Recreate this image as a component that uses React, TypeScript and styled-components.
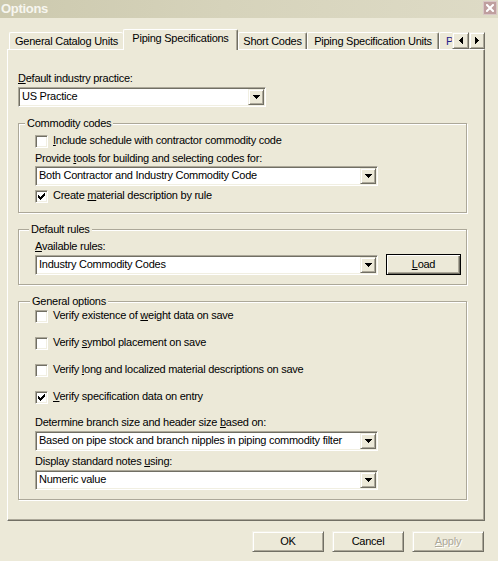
import React from "react";
import styled, { createGlobalStyle, css } from "styled-components";

const Global = createGlobalStyle`
  html, body { margin: 0; padding: 0; background: #ece9d8; }
  body {
    font-family: "Liberation Sans", Arial, sans-serif;
    font-size: 11px;
    letter-spacing: -0.25px;
    color: #000;
  }
  * { box-sizing: border-box; }
`;

const raised = css`
  border: 1px solid;
  border-color: #f1efe2 #716f64 #716f64 #f1efe2;
  box-shadow: inset 1px 1px 0 #fff, inset -1px -1px 0 #aca899;
  background: #ece9d8;
`;

const sunken = css`
  border: 1px solid;
  border-color: #aca899 #fff #fff #aca899;
  box-shadow: inset 1px 1px 0 #716f64, inset -1px -1px 0 #f1efe2;
  background: #fff;
`;

const Window = styled.div`
  width: 498px;
  height: 561px;
  background: #ece9d8;
  display: flex;
  flex-direction: column;
  overflow: hidden;
`;

const TitleBar = styled.div`
  height: 18px;
  flex: none;
  display: flex;
  align-items: flex-start;
  justify-content: space-between;
  padding: 0 1px 0 1px;
  background: linear-gradient(to right, #ccc9ae 0%, #d6d3bb 45%, #dedbc6 100%);
`;

const TitleText = styled.span`
  font-family: "Liberation Sans", Arial, sans-serif;
  font-weight: bold;
  font-size: 13px;
  letter-spacing: -0.3px;
  line-height: 17px;
  color: #f7f6ef;
`;

const CloseBtn = styled.div`
  width: 14px;
  height: 14px;
  margin-top: 1px;
  background: #bf9f9f;
  border: 1px solid #d9c6c6;
  border-radius: 1px;
  display: flex;
  align-items: center;
  justify-content: center;
`;

const Body = styled.div`
  padding: 11px 13px 0 7px;
  display: flex;
  flex-direction: column;
`;

const TabStrip = styled.div`
  height: 21px;
  margin-bottom: -1px;
  display: flex;
  align-items: flex-end;
  position: relative;
  z-index: 1;
`;

const TabViewport = styled.div`
  flex: 1;
  min-width: 0;
  height: 21px;
  display: flex;
  align-items: flex-end;
  overflow: hidden;
  padding-left: 2px;
`;

const Tab = styled.div<{ $w: number; $active?: boolean; $noRight?: boolean; $color?: string }>`
  flex: none;
  width: ${(p) => p.$w}px;
  height: ${(p) => (p.$active ? 21 : 17)}px;
  margin-bottom: ${(p) => (p.$active ? 0 : 1)}px;
  padding-top: 2px;
  display: flex;
  justify-content: ${(p) => (p.$color ? "flex-start" : "center")};
  padding-left: ${(p) => (p.$color ? 6 : 0)}px;
  line-height: 13px;
  white-space: nowrap;
  background: #ece9d8;
  color: ${(p) => p.$color ?? "#000"};
  border-top: 1px solid #fff;
  border-left: 1px solid #fff;
  border-right: ${(p) => (p.$noRight ? "0" : "1px solid #716f64")};
  box-shadow: ${(p) => (p.$noRight ? "none" : "inset -1px 0 0 #aca899")};
  border-radius: 2px 2px 0 0;
`;

const ScrollBtn = styled.div<{ $w: number }>`
  ${raised};
  flex: none;
  width: ${(p) => p.$w}px;
  height: 17px;
  margin-bottom: 1px;
  display: flex;
  align-items: center;
  justify-content: center;
`;

const Panel = styled.div`
  height: 472px;
  border-top: 1px solid #fff;
  border-left: 1px solid #fff;
  border-right: 1px solid #716f64;
  border-bottom: 1px solid #716f64;
  box-shadow: inset -1px -1px 0 #aca899;
  padding: 22px 16px 0 10px;
  display: flex;
  flex-direction: column;
  align-items: flex-start;
`;

const FieldLabel = styled.div<{ $mt?: number; $mb?: number }>`
  line-height: 13px;
  white-space: nowrap;
  margin-top: ${(p) => p.$mt ?? 0}px;
  margin-bottom: ${(p) => p.$mb ?? 2}px;
`;

const Combo = styled.div<{ $w: number }>`
  ${sunken};
  flex: none;
  width: ${(p) => p.$w}px;
  height: 20px;
  padding: 1px;
  display: flex;
  align-items: stretch;
`;

const ComboText = styled.span`
  flex: 1;
  min-width: 0;
  padding: 1px 0 0 2px;
  line-height: 13px;
  white-space: nowrap;
  overflow: hidden;
`;

const DropBtn = styled.span`
  ${raised};
  flex: none;
  width: 16px;
  height: 16px;
  display: flex;
  align-items: center;
  justify-content: center;
`;

const Group = styled.fieldset`
  margin: 10px 0 0 0;
  padding: 0;
  width: 449px;
  min-width: 0;
  border: 1px solid #aca899;
  box-shadow: inset 1px 1px 0 #fff, 1px 1px 0 #fff;
`;

const Legend = styled.legend<{ $off: number }>`
  margin-left: ${(p) => p.$off}px;
  padding: 0 2px;
  line-height: 13px;
  background: #ece9d8;
`;

const GroupBody = styled.div<{ $pt: number }>`
  padding: ${(p) => p.$pt}px 16px 9px 16px;
  display: flex;
  flex-direction: column;
  align-items: flex-start;
`;

const CheckRow = styled.div<{ $mt?: number }>`
  display: flex;
  align-items: flex-start;
  gap: 5px;
  height: 13px;
  margin-top: ${(p) => p.$mt ?? 0}px;
`;

const CheckBox = styled.span`
  ${sunken};
  flex: none;
  width: 13px;
  height: 13px;
  padding: 2px 0 0 2px;
`;

const CheckText = styled.span`
  line-height: 13px;
  margin-top: -1px;
  white-space: nowrap;
`;

const RuleRow = styled.div`
  display: flex;
  align-items: flex-end;
  gap: 8px;
`;

const LoadButton = styled.div`
  width: 75px;
  height: 21px;
  border: 1px solid #000;
  background: #ece9d8;
  box-shadow: inset 1px 1px 0 #fff, inset -1px -1px 0 #716f64, inset -2px -2px 0 #aca899;
  display: flex;
  align-items: center;
  justify-content: center;
  line-height: 13px;
`;

const Footer = styled.div`
  display: flex;
  justify-content: flex-end;
  gap: 8px;
  padding: 10px 14px 0 0;
`;

const PushButton = styled.div<{ $disabled?: boolean }>`
  ${raised};
  width: 72px;
  height: 21px;
  display: flex;
  align-items: center;
  justify-content: center;
  line-height: 13px;
  color: ${(p) => (p.$disabled ? "#aca899" : "#000")};
  text-shadow: ${(p) => (p.$disabled ? "1px 1px 0 #fff" : "none")};
`;

const U = styled.span`
  text-decoration: underline;
  text-underline-offset: 1px;
`;

const Pix = styled.svg`
  display: block;
`;

const CheckMark = () => (
  <Pix width="7" height="7" viewBox="0 0 7 7" shapeRendering="crispEdges">
    <path
      fill="#000"
      d="M6 0h1v1h-1z M5 1h2v1h-2z M0 2h1v1h-1z M4 2h3v1h-3z M0 3h2v1h-2z M3 3h3v1h-3z M0 4h5v1h-5z M1 5h3v1h-3z M2 6h1v1h-1z"
    />
  </Pix>
);

const DownArrow = () => (
  <Pix width="7" height="4" viewBox="0 0 7 4" shapeRendering="crispEdges">
    <path fill="#000" d="M0 0h7v1h-7z M1 1h5v1h-5z M2 2h3v1h-3z M3 3h1v1h-1z" />
  </Pix>
);

const LeftArrow = () => (
  <Pix width="4" height="7" viewBox="0 0 4 7" shapeRendering="crispEdges">
    <path fill="#000" d="M3 0h1v7h-1z M2 1h1v5h-1z M1 2h1v3h-1z M0 3h1v1h-1z" />
  </Pix>
);

const RightArrow = () => (
  <Pix width="4" height="7" viewBox="0 0 4 7" shapeRendering="crispEdges">
    <path fill="#000" d="M0 0h1v7h-1z M1 1h1v5h-1z M2 2h1v3h-1z M3 3h1v1h-1z" />
  </Pix>
);

const CloseX = () => (
  <Pix width="8" height="8" viewBox="0 0 8 8">
    <path d="M1 1L7 7M7 1L1 7" stroke="#fff" strokeWidth="2" strokeLinecap="square" />
  </Pix>
);

const Dropdown = ({ w, value }: { w: number; value: string }) => (
  <Combo $w={w}>
    <ComboText>{value}</ComboText>
    <DropBtn>
      <DownArrow />
    </DropBtn>
  </Combo>
);

const Check = ({ checked, children, mt }: { checked?: boolean; children: React.ReactNode; mt?: number }) => (
  <CheckRow $mt={mt}>
    <CheckBox>{checked && <CheckMark />}</CheckBox>
    <CheckText>{children}</CheckText>
  </CheckRow>
);

export default function App() {
  return (
    <>
      <Global />
      <Window>
        <TitleBar>
          <TitleText>Options</TitleText>
          <CloseBtn>
            <CloseX />
          </CloseBtn>
        </TitleBar>
        <Body>
          <TabStrip>
            <TabViewport>
              <Tab $w={114} $noRight>General Catalog Units</Tab>
              <Tab $w={115} $active>Piping Specifications</Tab>
              <Tab $w={69}>Short Codes</Tab>
              <Tab $w={132}>Piping Specification Units</Tab>
              <Tab $w={16} $color="#22228a" $noRight>P</Tab>
            </TabViewport>
            <ScrollBtn $w={17}>
              <LeftArrow />
            </ScrollBtn>
            <ScrollBtn $w={16}>
              <RightArrow />
            </ScrollBtn>
          </TabStrip>
          <Panel>
            <FieldLabel>
              <U>D</U>efault industry practice:
            </FieldLabel>
            <Dropdown w={248} value="US Practice" />

            <Group>
              <Legend $off={6}>Commodity codes</Legend>
              <GroupBody $pt={5}>
                <Check>
                  <U>I</U>nclude schedule with contractor commodity code
                </Check>
                <FieldLabel $mt={4} $mb={1}>
                  Provide <U>t</U>ools for building and selecting codes for:
                </FieldLabel>
                <Dropdown w={343} value="Both Contractor and Industry Commodity Code" />
                <Check checked mt={4}>
                  Create <U>m</U>aterial description by rule
                </Check>
              </GroupBody>
            </Group>

            <Group>
              <Legend $off={10}>Default rules</Legend>
              <GroupBody $pt={4}>
                <FieldLabel $mb={1}>
                  <U>A</U>vailable rules:
                </FieldLabel>
                <RuleRow>
                  <Dropdown w={343} value="Industry Commodity Codes" />
                  <LoadButton>
                    <span>
                      <U>L</U>oad
                    </span>
                  </LoadButton>
                </RuleRow>
              </GroupBody>
            </Group>

            <Group>
              <Legend $off={11}>General options</Legend>
              <GroupBody $pt={2}>
                <Check>
                  Verify existence of <U>w</U>eight data on save
                </Check>
                <Check mt={14}>
                  Verify <U>s</U>ymbol placement on save
                </Check>
                <Check mt={14}>
                  Verify <U>l</U>ong and localized material descriptions on save
                </Check>
                <Check checked mt={14}>
                  <U>V</U>erify specification data on entry
                </Check>
                <FieldLabel $mt={12}>
                  Determine branch size and header size <U>b</U>ased on:
                </FieldLabel>
                <Dropdown w={343} value="Based on pipe stock and branch nipples in piping commodity filter" />
                <FieldLabel $mt={4}>
                  Display standard notes <U>u</U>sing:
                </FieldLabel>
                <Dropdown w={343} value="Numeric value" />
              </GroupBody>
            </Group>
          </Panel>
        </Body>
        <Footer>
          <PushButton>OK</PushButton>
          <PushButton>Cancel</PushButton>
          <PushButton $disabled>
            <span>
              <U>A</U>pply
            </span>
          </PushButton>
        </Footer>
      </Window>
    </>
  );
}
